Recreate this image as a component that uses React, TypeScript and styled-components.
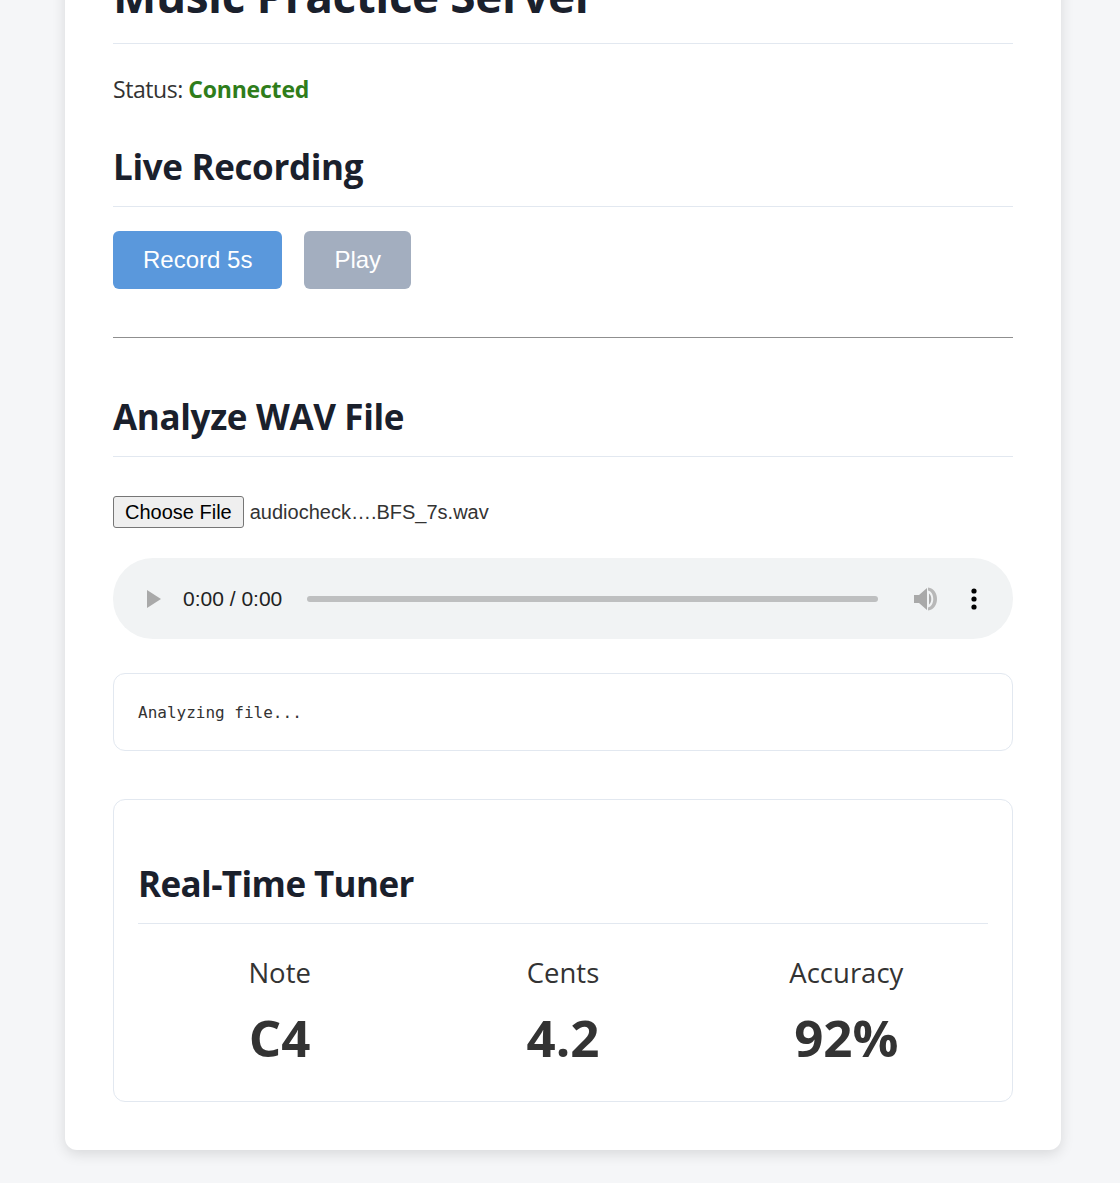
import { createGlobalStyle, styled } from "styled-components";

const GlobalStyle = createGlobalStyle`
  html, body {
    margin: 0;
    padding: 0;
    background: #f5f6f8;
  }
  * {
    box-sizing: border-box;
  }
`;

const Page = styled.div`
  height: 100vh;
  overflow: hidden;
  display: flex;
  flex-direction: column;
  justify-content: flex-end;
  align-items: flex-start;
  padding: 0 59px 33px 65px;
  font-family: "Open Sans", "Noto Sans", sans-serif;
  color: #333;
`;

const Card = styled.main`
  flex-shrink: 0;
  width: 996px;
  padding: 48px;
  background: #fff;
  border-radius: 12px;
  box-shadow: 0 4px 14px rgba(0, 0, 0, 0.12);
`;

const Title = styled.h1`
  margin: 0 0 24px;
  padding-bottom: 20px;
  font-size: 46px;
  line-height: 1.2;
  letter-spacing: -0.45px;
  font-weight: 700;
  color: #1a202c;
  border-bottom: 1px solid #e2e8f0;
`;

const Status = styled.p`
  margin: 0 0 35px;
  font-size: 23px;
  line-height: 42px;
  letter-spacing: -0.45px;
`;

const Connected = styled.strong`
  letter-spacing: -0.2px;
  color: #2f7d1b;
`;

const Heading = styled.h2`
  margin: 0 0 24px;
  padding-bottom: 18px;
  font-size: 35px;
  line-height: 43px;
  letter-spacing: -0.35px;
  font-weight: 700;
  color: #1a202c;
  border-bottom: 1px solid #e2e8f0;
`;

const TunerHeading = styled(Heading)`
  letter-spacing: -0.6px;
`;

const Buttons = styled.div`
  display: flex;
  gap: 22px;
`;

const Button = styled.button<{ $disabled?: boolean }>`
  height: 58px;
  padding: 0 30px;
  border: 0;
  border-radius: 6px;
  background: ${(props) => (props.$disabled ? "#a3aebf" : "#5a98dc")};
  color: #fff;
  font-family: "Liberation Sans", Arial, sans-serif;
  font-size: 24px;
`;

const Divider = styled.hr`
  height: 1px;
  margin: 48px 0 57px;
  border: 0;
  background: #8f8f8f;
`;

const FileRow = styled.div`
  display: flex;
  align-items: center;
  gap: 6px;
  margin-top: 39px;
  font-family: "Liberation Sans", Arial, sans-serif;
  font-size: 20px;
`;

const ChooseFile = styled.button`
  height: 32px;
  padding: 0 11px;
  border: 1px solid #767676;
  border-radius: 3px;
  background: #efefef;
  color: #000;
  font-family: inherit;
  font-size: inherit;
`;

const Player = styled.div`
  display: flex;
  align-items: center;
  height: 81px;
  margin-top: 30px;
  padding: 0 35px 0 33px;
  border-radius: 40px;
  background: #f1f3f4;
  font-family: "Liberation Sans", Arial, sans-serif;
  font-size: 21px;
  color: #222;
`;

const Time = styled.span`
  margin-left: 21px;
  white-space: nowrap;
`;

const Track = styled.div`
  flex: 1;
  height: 6px;
  margin: 0 36px 0 25px;
  border-radius: 3px;
  background: #bebfc0;
`;

const Kebab = styled.svg`
  margin-left: 32px;
`;

const Log = styled.pre`
  margin: 34px 0 48px;
  padding: 24px;
  height: 78px;
  border: 1px solid #e2e8f0;
  border-radius: 12px;
  font-family: "DejaVu Sans Mono", monospace;
  font-size: 16px;
  line-height: 30px;
`;

const Tuner = styled.section`
  padding: 62px 24px 32px;
  border: 1px solid #e2e8f0;
  border-radius: 12px;
`;

const Stats = styled.div`
  display: grid;
  grid-template-columns: repeat(3, 1fr);
  margin-top: 29px;
  text-align: center;
`;

const Label = styled.div`
  font-size: 27.5px;
  line-height: 40px;
`;

const Value = styled.div`
  margin-top: 12px;
  font-size: 51px;
  line-height: 64px;
  font-weight: 700;
`;

const stats = [
  { label: "Note", value: "C4" },
  { label: "Cents", value: "4.2" },
  { label: "Accuracy", value: "92%" },
];

function App() {
  return (
    <Page>
      <GlobalStyle />
      <Card>
        <Title>Music Practice Server</Title>
        <Status>
          Status: <Connected>Connected</Connected>
        </Status>
        <Heading>Live Recording</Heading>
        <Buttons>
          <Button>Record 5s</Button>
          <Button $disabled>Play</Button>
        </Buttons>
        <Divider />
        <Heading>Analyze WAV File</Heading>
        <FileRow>
          <ChooseFile>Choose File</ChooseFile>
          <span>audiocheck….BFS_7s.wav</span>
        </FileRow>
        <Player>
          <svg width="16" height="18" viewBox="0 0 16 18">
            <path d="M1 0 L15 9 L1 18 Z" fill="#a9a9a9" />
          </svg>
          <Time>0:00 / 0:00</Time>
          <Track />
          <svg width="24" height="24" viewBox="0 0 24 24">
            <path d="M0 8 H5 L13 1 V23 L5 16 H0 Z" fill="#a9a9a9" />
            <path d="M15 6.5 C18 8.5 18 15.5 15 17.5 Z" fill="#a9a9a9" />
            <path d="M14 0.5 C26 2 26 22 14 23.5 V20.5 C21 19 21 5 14 3.5 Z" fill="#b8b8b8" />
          </svg>
          <Kebab width="8" height="22" viewBox="0 0 8 22">
            <circle cx="4" cy="3" r="2.6" fill="#000" />
            <circle cx="4" cy="11" r="2.6" fill="#000" />
            <circle cx="4" cy="19" r="2.6" fill="#000" />
          </Kebab>
        </Player>
        <Log>Analyzing file...</Log>
        <Tuner>
          <TunerHeading>Real-Time Tuner</TunerHeading>
          <Stats>
            {stats.map((stat) => (
              <div key={stat.label}>
                <Label>{stat.label}</Label>
                <Value>{stat.value}</Value>
              </div>
            ))}
          </Stats>
        </Tuner>
      </Card>
    </Page>
  );
}

export default App;
